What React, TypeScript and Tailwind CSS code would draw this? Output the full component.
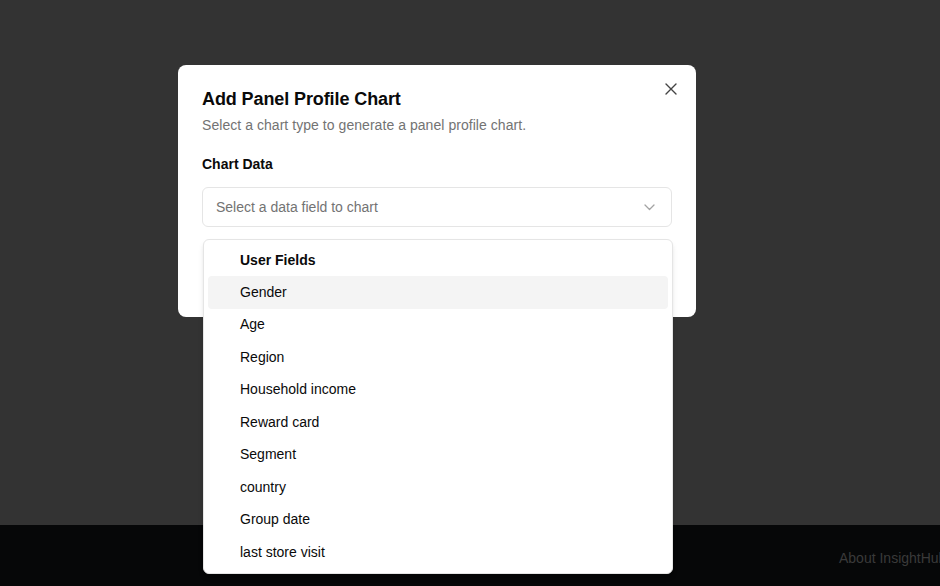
import React from "react";

const fields = [
  "Gender",
  "Age",
  "Region",
  "Household income",
  "Reward card",
  "Segment",
  "country",
  "Group date",
  "last store visit",
];

export default function App() {
  return (
    <div
      className="relative w-[940px] h-[586px] overflow-hidden flex flex-col"
      style={{ fontFamily: '"Liberation Sans", Arial, sans-serif' }}
    >
      {/* dimmed page */}
      <div className="h-[525px] bg-[#333333]" />
      <div className="h-[61px] bg-[#060708] flex items-center pl-[839px] pt-[6px] whitespace-nowrap">
        <span className="text-[14px] text-[#3a3a3a] shrink-0">About InsightHub</span>
      </div>

      {/* Dialog */}
      <div className="absolute left-[178px] top-[65px] w-[518px] h-[252px] bg-white rounded-lg px-6 pt-[20px]">
        <button className="absolute right-[19px] top-[18px] text-[#444]">
          <svg width="12" height="12" viewBox="0 0 12 12" fill="none" stroke="currentColor" strokeWidth="1.4" strokeLinecap="round">
            <path d="M1 1L11 11M11 1L1 11" />
          </svg>
        </button>
        <h2 className="text-[18px] leading-[28px] font-bold text-[#0a0a0a] tracking-[-0.1px]">Add Panel Profile Chart</h2>
        <p className="text-[14px] leading-[20px] text-[#737373] mt-[2px] tracking-[0.05px]">
          Select a chart type to generate a panel profile chart.
        </p>
        <div className="mt-[19px] text-[14px] leading-[20px] font-bold text-[#0a0a0a]">Chart Data</div>
        <div className="mt-[13px] h-[40px] rounded-md border border-[#e5e5e5] flex items-center justify-between pl-[13px] pr-[16px]">
          <span className="text-[14px] text-[#737373]">Select a data field to chart</span>
          <svg width="11" height="7" viewBox="0 0 11 7" fill="none" stroke="#a3a3a3" strokeWidth="1.3" strokeLinecap="round" strokeLinejoin="round">
            <path d="M1 1L5.5 5.5L10 1" />
          </svg>
        </div>
      </div>

      {/* Select dropdown */}
      <div className="absolute left-[203px] top-[239px] w-[470px] bg-white rounded-md border border-[#e5e5e5] shadow-md p-1">
        <div className="h-[32px] flex items-center pl-[32px] text-[14px] font-bold text-[#0a0a0a]">User Fields</div>
        {fields.map((f, i) => (
          <div
            key={f}
            className={`h-[32.5px] flex items-center pl-[32px] text-[14px] text-[#0a0a0a] rounded-sm ${
              i === 0 ? "bg-[#f4f4f4]" : ""
            }`}
          >
            {f}
          </div>
        ))}
      </div>
    </div>
  );
}
